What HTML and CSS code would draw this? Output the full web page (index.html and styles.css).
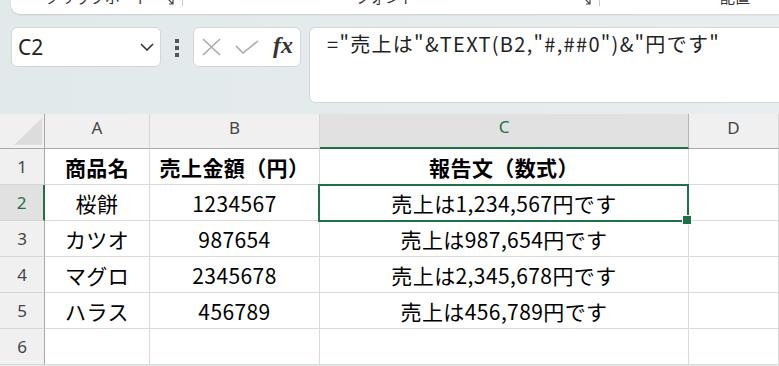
FILE: index.html
```html
<!DOCTYPE html>
<html lang="ja">
<head>
  <meta charset="UTF-8">
  <title>売上報告</title>
  <link rel="stylesheet" href="styles.css">
</head>
<body>

  <div class="top">
    <div class="ribbon">
      <div class="group g1">
        <span class="glabel">クリップボード</span>
        <svg class="launcher" width="8" height="8" viewBox="0 0 8 8"><path d="M1 1 L7 7 M3 7 H7 V3" stroke="#444" stroke-width="1.2" fill="none"/></svg>
      </div>
      <div class="group g2">
        <span class="glabel">フォント</span>
        <svg class="launcher" width="8" height="8" viewBox="0 0 8 8"><path d="M1 1 L7 7 M3 7 H7 V3" stroke="#444" stroke-width="1.2" fill="none"/></svg>
      </div>
      <div class="group g3">
        <span class="glabel">配置</span>
      </div>
    </div>

    <div class="bar">
      <div class="namebox">
        <span>C2</span>
        <svg width="14" height="8" viewBox="0 0 14 8"><path d="M1 1 L7 7 L13 1" stroke="#333" stroke-width="1.6" fill="none"/></svg>
      </div>
      <div class="dots"><i></i><i></i><i></i></div>
      <div class="fxbox">
        <svg width="19" height="18" viewBox="0 0 19 18"><path d="M1 1 L18 17 M18 1 L1 17" stroke="#a9a9a9" stroke-width="1.6" fill="none"/></svg>
        <svg width="24" height="14" viewBox="0 0 24 14"><path d="M1 6 L8 13 L23 1" stroke="#a9a9a9" stroke-width="1.6" fill="none"/></svg>
        <span class="fx">fx</span>
      </div>
      <div class="formula">="売上は"&amp;TEXT(B2,"#,##0")&amp;"円です"</div>
    </div>
  </div>

  <div class="sheet">
    <div class="ch corner"><div class="tri"></div></div>
    <div class="ch">A</div>
    <div class="ch">B</div>
    <div class="ch sel">C</div>
    <div class="ch">D</div>

    <div class="rh">1</div>
    <div class="c bold">商品名</div>
    <div class="c bold">売上金額（円）</div>
    <div class="c bold">報告文（数式）</div>
    <div class="c"></div>

    <div class="rh sel">2</div>
    <div class="c">桜餅</div>
    <div class="c">1234567</div>
    <div class="c active">売上は1,234,567円です</div>
    <div class="c"></div>

    <div class="rh">3</div>
    <div class="c">カツオ</div>
    <div class="c">987654</div>
    <div class="c">売上は987,654円です</div>
    <div class="c"></div>

    <div class="rh">4</div>
    <div class="c">マグロ</div>
    <div class="c">2345678</div>
    <div class="c">売上は2,345,678円です</div>
    <div class="c"></div>

    <div class="rh">5</div>
    <div class="c">ハラス</div>
    <div class="c">456789</div>
    <div class="c">売上は456,789円です</div>
    <div class="c"></div>

    <div class="rh">6</div>
    <div class="c"></div>
    <div class="c"></div>
    <div class="c"></div>
    <div class="c"></div>
  </div>

</body>
</html>
```

FILE: styles.css
```css
* {
  box-sizing: border-box;
}
body {
  margin: 0;
  width: 779px;
  height: 366px;
  overflow: hidden;
  font-family: "Noto Sans", "Noto Sans CJK JP", sans-serif;
  background: #e5ecee;
}

/* top area: ribbon edge, name box, formula bar */
.top {
  height: 114px;
  background: linear-gradient(90deg, #e2e9eb, #e8eef0);
}
.ribbon {
  margin-left: 11px;
  height: 14px;
  background: #fff;
  border-bottom-left-radius: 9px;
  box-shadow: 0 1px 2px rgba(0, 0, 0, 0.12);
  display: flex;
  align-items: flex-start;
  overflow: hidden;
}
.group {
  height: 6px;
  display: flex;
  align-items: flex-start;
  border-right: 1px solid #c8c8c8;
}
.g1 { width: 172px; }
.g2 { width: 417px; }
.g3 { flex: 1; border-right: none; }
.glabel {
  margin-top: -11px;
  font: 15px/16px "Noto Sans CJK JP", sans-serif;
  color: #333;
  white-space: nowrap;
}
.g1 .glabel { margin-left: 34px; }
.g2 .glabel { margin-left: 172px; }
.g3 .glabel { margin-left: 120px; }
.launcher {
  margin-top: -3px;
  margin-left: auto;
  margin-right: 8px;
}

.bar {
  display: flex;
  align-items: flex-start;
  margin-top: 13px;
  padding-left: 11px;
}
.namebox {
  width: 150px;
  height: 40px;
  background: #fff;
  border: 1px solid #d3d7d9;
  border-radius: 6px;
  display: flex;
  align-items: center;
  justify-content: space-between;
  padding: 0 6px 1px 6px;
  font-size: 21px;
  color: #222;
}
.dots {
  width: 32px;
  display: flex;
  flex-direction: column;
  align-items: center;
  gap: 3px;
  padding-top: 12px;
}
.dots i {
  display: block;
  width: 4px;
  height: 4px;
  background: #555;
}
.fxbox {
  width: 108px;
  height: 40px;
  background: #fff;
  border: 1px solid #d3d7d9;
  border-radius: 6px;
  display: flex;
  align-items: center;
  gap: 14px;
  padding-left: 8px;
}
.fx {
  font: italic bold 24px "Liberation Serif", serif;
  color: #333;
  padding-bottom: 3px;
}
.formula {
  flex: 1;
  height: 76px;
  margin-left: 8px;
  background: #fff;
  border: 1px solid #d3d7d9;
  border-right: none;
  border-radius: 6px 0 0 6px;
  padding: 2px 0 0 17px;
  font: 20px/28px "Noto Sans CJK JP", sans-serif;
  letter-spacing: 1.3px;
  color: #222;
  white-space: nowrap;
}

/* worksheet grid */
.sheet {
  display: grid;
  grid-template-columns: 45px 105px 170px 369px 90px;
  grid-template-rows: 35px repeat(6, 36px);
}
.c {
  background: #fff;
  border-right: 1px solid #dadada;
  border-bottom: 1px solid #dadada;
  display: flex;
  align-items: center;
  justify-content: center;
  font: 21px "Noto Sans CJK JP", sans-serif;
  letter-spacing: 0.4px;
  color: #000;
  white-space: nowrap;
}
.bold {
  font-weight: bold;
}
.ch {
  background: #f0f0f0;
  border-right: 1px solid #d6d6d6;
  border-bottom: 1px solid #a8a8a8;
  display: flex;
  align-items: center;
  justify-content: center;
  padding-bottom: 8px;
  font-size: 17px;
  color: #444;
}
.ch.sel {
  background: #e1e1e1;
  color: #1e7145;
  border-bottom: 2px solid #1e7145;
  border-right-color: #b5b5b5;
}
.corner {
  border-right: 1px solid #a8a8a8;
  padding: 4px 2px 3px 0;
  align-items: stretch;
  justify-content: flex-end;
}
.tri {
  width: 28px;
  background: #dcdcdc;
  clip-path: polygon(100% 0, 100% 100%, 0 100%);
}
.rh {
  background: #f0f0f0;
  border-right: 1px solid #a8a8a8;
  border-bottom: 1px solid #d6d6d6;
  display: flex;
  align-items: center;
  justify-content: center;
  font-size: 17px;
  color: #444;
}
.rh.sel {
  background: #e1e1e1;
  color: #1e7145;
  border-right: 2px solid #1e7145;
}

/* active cell C2 */
.active {
  position: relative;
  z-index: 1;
}
.active::after {
  content: "";
  position: absolute;
  left: -2px;
  top: -1px;
  right: -1px;
  bottom: -2px;
  border: 2px solid #1e7145;
}
.active::before {
  content: "";
  position: absolute;
  right: -4px;
  bottom: -5px;
  width: 8px;
  height: 8px;
  background: #1e7145;
  border: 1px solid #fff;
  z-index: 2;
}
```
